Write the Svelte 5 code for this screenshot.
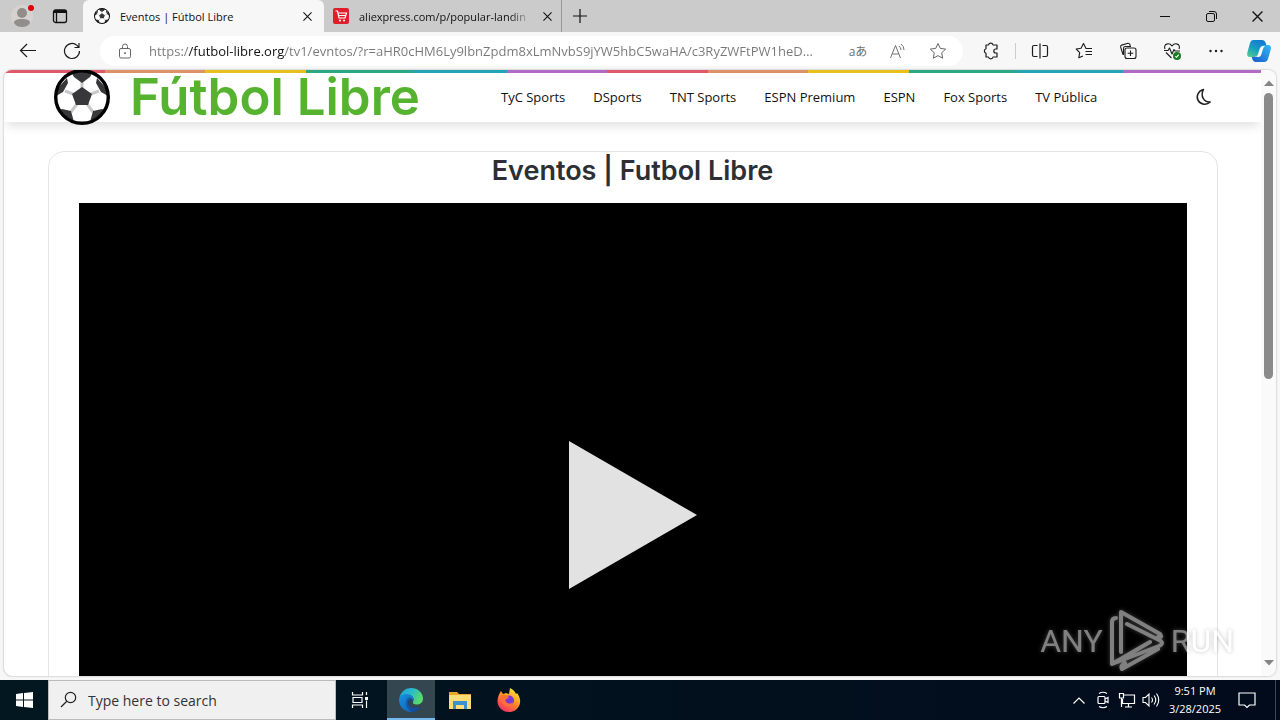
<script>
  const channels = ['TyC Sports', 'DSports', 'TNT Sports', 'ESPN Premium', 'ESPN', 'Fox Sports', 'TV Pública'];
  let url = $state('https://futbol-libre.org/tv1/evntos/?r=aHR0cHM6Ly9lbnZpdm8xLmNvbS9jYW5hbC5waHA/c3RyZWFtPW1heDE0MQ==');
  let query = $state('');
</script>

{#snippet ball(size)}
  <svg width={size} height={size} viewBox="0 0 56 56" aria-hidden="true">
    <circle cx="28" cy="28" r="26.5" fill="#fff" />
    <g stroke="#c9c9c9" stroke-width="3">
      <path d="M28 22V10M37 25l8-3M33 35l6 8M23 35l-6 8M19 25l-8-3" />
    </g>
    <g fill="#38383a">
      <path d="M28 18l10 7-4 11H22l-4-11z" />
      <path d="M17 3h22l-3 5-8 6-8-6z" />
      <path d="M43 9l10 11 1 7-7-4-5-9zM13 9L3 20l-1 7 7-4 5-9z" />
      <path d="M36 53l3-11 9-2 3 1-6 9zM20 53l-3-11-9-2-3 1 6 9z" />
    </g>
    <circle cx="28" cy="28" r="26.3" fill="none" stroke="#000" stroke-width="3.4" />
  </svg>
{/snippet}

{#snippet cross(size)}
  <svg width={size} height={size} viewBox="0 0 10 10" fill="none" stroke="currentColor" stroke-width="1.2"><path d="M.5.5l9 9M9.500.5l-9 9" /></svg>
{/snippet}

<div class="desktop">
  <div class="browser">
    <div class="tabs">
      <button class="profile" aria-label="Profile">
        <svg width="24" height="24" viewBox="0 0 24 24"><circle cx="12" cy="12" r="11" fill="#d5d2d0" /><circle cx="12" cy="9" r="5" fill="#918d8b" /><path d="M4 19c0-3 3-4 8-4s8 1 8 4c-2 3-5 4-8 4s-6-1-8-4z" fill="#918d8b" /><circle cx="21" cy="4" r="3" fill="#e3000b" /></svg>
      </button>
      <button class="workspace" aria-label="Tab actions">
        <svg width="16" height="16" viewBox="0 0 16 16" fill="none" stroke="#111" stroke-width="1.3"><rect x="1.500" y="2" width="13" height="12.500" rx="2" /><path d="M2 3.500h12" stroke-width="3" /><path d="M4.500 5v9" /></svg>
      </button>
      <div class="tab active">
        {@render ball(16)}
        <span class="tab-title">Eventos | Fútbol Libre</span>
        <button class="close" aria-label="Close tab">{@render cross(9)}</button>
      </div>
      <div class="tab">
        <svg width="16" height="16" viewBox="0 0 16 16"><rect width="16" height="16" rx="2" fill="#dd1f2d" /><path d="M2.500 3h2l1.500 7h6l1.500-5H5M6 7.500h7" fill="none" stroke="#fff" stroke-width="1.2" /><circle cx="7" cy="12.500" r="1" fill="#fff" /><circle cx="11" cy="12.500" r="1" fill="#fff" /></svg>
        <span class="tab-title">aliexpress.com/p/popular-landin</span>
        <button class="close" aria-label="Close tab">{@render cross(9)}</button>
      </div>
      <button class="newtab" aria-label="New tab">
        <svg width="14" height="14" viewBox="0 0 14 14" stroke="#111" stroke-width="1.2"><path d="M7 0v14M0 7h14" /></svg>
      </button>
      <div class="window-controls">
        <button aria-label="Minimize"><svg width="10" height="10" viewBox="0 0 10 10" stroke="#111"><path d="M0 5.500h10" /></svg></button>
        <button aria-label="Restore"><svg width="11" height="11" viewBox="0 0 11 11" fill="none" stroke="#111"><rect x=".5" y="2.500" width="8" height="8" rx="1.500" /><path d="M3 .5h5q2.500 0 2.500 2.500v5" /></svg></button>
        <button aria-label="Close">{@render cross(11)}</button>
      </div>
    </div>

    <div class="toolbar">
      <button aria-label="Back"><svg width="18" height="16" viewBox="0 0 18 16" fill="none" stroke="#1c1c1c" stroke-width="1.200"><path d="M8 1L1.500 7.500 8 14M1.500 7.500H17" /></svg></button>
      <button aria-label="Refresh"><svg width="18" height="18" viewBox="0 0 18 18" fill="none" stroke="#1c1c1c" stroke-width="1.200"><path d="M16.500 9a7.500 7.500 0 1 1-2.500-5.600l1.500 1.600M16 1v4.500h-4.500" /></svg></button>
      <div class="address">
        <button class="lock" aria-label="Site information"><svg width="14" height="16" viewBox="0 0 14 16" fill="none" stroke="#666"><rect x="1.500" y="5.500" width="11" height="9.500" rx="1.500" /><path d="M4.500 5.500V3.500a2.500 2.500 0 0 1 5 0v2" /><circle cx="7" cy="10.200" r=".6" fill="#666" /></svg></button>
        <input class="url" type="text" aria-label="Address" bind:value={url} />
        <button class="translate" aria-label="Translate">aあ</button>
        <button aria-label="Read aloud"><svg width="18" height="18" viewBox="0 0 18 18" fill="none" stroke="#707070"><path d="M1.500 16L6.500 3.500 11.500 16M3.200 12h6.600M10 4q2 1.500 2 4M12 2q3 2 3 6" /></svg></button>
        <button aria-label="Add to favorites"><svg width="18" height="18" viewBox="0 0 18 18" fill="none" stroke="#666" stroke-linejoin="round"><path d="M9 1.500l2.300 4.900 5.400.7-4 3.700 1 5.400L9 13.600l-4.700 2.600 1-5.400-4-3.700 5.400-.7z" /></svg></button>
      </div>
      <button aria-label="Extensions"><svg width="18" height="18" viewBox="0 0 18 18" fill="none" stroke="#1c1c1c" stroke-width="1.200" stroke-linejoin="round"><path d="M4 3h2.500a2.300 2.300 0 0 1 4.500 0H15v4h-1.200a2 2 0 0 0 0 4H15v4h-4a2.300 2.300 0 0 1-4.500 0H4v-3.800A2.300 2.300 0 0 1 4 6.800z" /></svg></button>
      <span class="separator"></span>
      <button aria-label="Split screen"><svg width="18" height="18" viewBox="0 0 18 18" fill="none" stroke="#1c1c1c" stroke-width="1.200"><path d="M6.500 3.500H3a1.500 1.500 0 0 0-1.500 1.500v8A1.500 1.500 0 0 0 3 14.500h3.500M9 1.500v15M11.500 3.500H15A1.500 1.500 0 0 1 16.500 5v8a1.500 1.500 0 0 1-1.500 1.500h-3.500" /></svg></button>
      <button aria-label="Favorites"><svg width="18" height="18" viewBox="0 0 18 18" fill="none" stroke="#1c1c1c" stroke-width="1.100" stroke-linejoin="round"><path d="M17 6.500h-6L8.500 1.500 6 6.200l-4.800.8 3.500 3.600-.9 5.200L8 14M10.500 9.500H17M10.500 12.500H17" /></svg></button>
      <button aria-label="Collections"><svg width="18" height="18" viewBox="0 0 18 18" fill="none" stroke="#1c1c1c" stroke-width="1.100"><path d="M4 12.500L1.700 5.300q-.4-1.600 1-2.200L9 1.300q1.300-.2 1.800 1.200l.5 1.500M4.500 13V6.500Q4.500 4.500 6.500 4.500H12" /><rect x="6" y="6" width="11" height="10.500" rx="2" fill="#f7f7f7" /><path d="M11.500 8.500v5.500M8.700 11.200h5.600" /></svg></button>
      <button aria-label="Browser essentials"><svg width="18" height="18" viewBox="0 0 18 18" fill="none" stroke="#1c1c1c" stroke-width="1.100" stroke-linejoin="round"><path d="M2 7C0 2 6 0 9 4c3-4 9-2 7 3M1 8.500h4L6.500 6l2.500 6 2-4.500 1 1.500h5M3 10.500l5.500 5.500" /><circle cx="14" cy="14" r="4" fill="#187d20" stroke="none" /><path d="M12.300 14.300l1.200 1 2.200-2.600" stroke="#fff" /></svg></button>
      <button aria-label="Settings and more"><svg width="14" height="4" viewBox="0 0 14 4" fill="#1c1c1c"><circle cx="1.500" cy="2" r="1.200" /><circle cx="7" cy="2" r="1.200" /><circle cx="12.500" cy="2" r="1.200" /></svg></button>
      <button class="copilot" aria-label="Copilot">
        <svg width="26" height="24" viewBox="0 0 26 24">
          <defs>
            <linearGradient id="co1" x1="0" y1="1" x2=".6" y2="0"><stop stop-color="#59d08b" /><stop offset=".5" stop-color="#18a2bd" /><stop offset="1" stop-color="#1479d5" /></linearGradient>
            <linearGradient id="co2" x1="0" y1="1" x2="1" y2="0"><stop stop-color="#1559cb" /><stop offset="1" stop-color="#35b9f5" /></linearGradient>
          </defs>
          <path d="M7 1h9q3 0 4 4l.5 2H17q-2.500 0-3.300 3L12 15q-1 3-4 3H4Q0 18 1.500 13L4 4q.8-3 3-3z" fill="url(#co1)" />
          <path d="M19 23h-9q-3 0-4-4l-.3-1H9q2.500 0 3.300-3L14 9q1-3 4-3h4q4 0 2.600 5L22 20q-.8 3-3 3z" fill="url(#co2)" />
          <path d="M16.500 7q-2 .5-2.800 3L12 15.500q-.6 2-2 2.500h2.500q2 0 2.800-2.500L17 10q.6-2 2-3z" fill="#f7f7f7" />
        </svg>
      </button>
    </div>

    <div class="viewport">
      <div class="page">
        <div class="rainbow"></div>
        <header>
          <a class="brand" href="#inicio">
            {@render ball(56)}
            <span>Fútbol Libre</span>
          </a>
          <nav>
            {#each channels as channel}
              <a href="#canal">{channel}</a>
            {/each}
          </nav>
          <button class="theme" aria-label="Dark mode"><svg width="18" height="18" viewBox="0 0 18 18" fill="none" stroke="#222" stroke-width="1.500" stroke-linejoin="round"><path d="M8.500 1.500C3 3 .8 8.500 3.200 12.500c2.500 4.300 8.500 5 12 1.500C9 14.500 5 8 8.500 1.500z" /></svg></button>
        </header>
        <main>
          <h1>Eventos | Futbol Libre</h1>
          <div class="player">
            <button class="play" aria-label="Play"><svg width="128" height="148" viewBox="0 0 128 148"><path d="M0 0l128 74L0 148z" fill="#e2e2e2" /></svg></button>
          </div>
        </main>
      </div>
      <div class="scrollbar">
        <svg width="10" height="6" viewBox="0 0 10 6"><path d="M0 6l5-5.500L10 6z" fill="#858585" /></svg>
        <div class="track"><div class="thumb"></div></div>
        <svg width="10" height="6" viewBox="0 0 10 6"><path d="M0 0l5 5.500L10 0z" fill="#858585" /></svg>
      </div>
    </div>
  </div>

  <div class="taskbar">
    <button class="start" aria-label="Start"><svg width="17" height="16" viewBox="0 0 17 16" fill="#fff"><path d="M0 2l7-1v6.500H0zM8 .900L17 0v7.500H8zM0 8.500h7V15l-7-1zM8 8.500h9V16l-9-1z" /></svg></button>
    <label class="search">
      <svg width="18" height="18" viewBox="0 0 18 18" fill="none" stroke="#222" stroke-width="1.200"><circle cx="10.500" cy="6.500" r="5.200" /><path d="M6.800 10.300L1 16" /></svg>
      <input type="text" aria-label="Search" placeholder="Type here to search" bind:value={query} />
    </label>
    <button class="taskview" aria-label="Task view"><svg width="18" height="16" viewBox="0 0 18 16" fill="none" stroke="#fff" stroke-width="1.200"><path d="M1.500 0v3h10V0M1.500 16v-3h10v3M2 5.500h9v5H2zM15.500 0v3M15.500 8.500V16" /><path d="M14 5h3v3h-3z" fill="#fff" stroke="none" /></svg></button>
    <button class="app open" aria-label="Edge">
      <svg width="24" height="24" viewBox="0 0 24 24">
        <defs>
          <linearGradient id="e1" x1="0" y1="0" x2="1" y2=".4"><stop stop-color="#219ed8" /><stop offset=".5" stop-color="#28b9ce" /><stop offset="1" stop-color="#58da6d" /></linearGradient>
          <linearGradient id="e2" x1="0" y1="0" x2="1" y2="1"><stop stop-color="#1593df" /><stop offset="1" stop-color="#1456ac" /></linearGradient>
        </defs>
        <path d="M.5 10C2 3 7 0 12 0c7 0 12 5 12 10.500 0 4-3 6-6.500 6-3 0-4-1-3.500-2.500 2-4-1-7-5-7-4 0-7 1-8.500 3z" fill="url(#e1)" />
        <path d="M0 12c0-4 4-6 8-6 5 0 7.500 4 6 7-1-3-5-2-5 1.500 0 5 6 7 12 4.500C19 22.500 16 24 12 24 5 24 0 18 0 12z" fill="url(#e2)" />
        <path d="M8.800 10C5 14 7 21 13 24c4 0 7-2 9-5.500-6 2.500-12 .5-12-4 0-2 2-3 4-1.500C14 10 11 9 8.800 10z" fill="#123f8b" opacity=".55" />
      </svg>
    </button>
    <button class="app" aria-label="File Explorer"><svg width="22" height="19" viewBox="0 0 22 19"><path d="M0 1h8l2 2h12v15H0z" fill="#e9a72b" /><path d="M0 4h22v14H0z" fill="#ffdc76" /><path d="M4 10h14v8h-3v-4H7v4H4z" fill="#3b91cb" /></svg></button>
    <button class="app" aria-label="Firefox">
      <svg width="24" height="24" viewBox="0 0 24 24">
        <defs><linearGradient id="f1" x1=".8" y1="0" x2=".2" y2="1"><stop stop-color="#fff044" /><stop offset=".45" stop-color="#ff9421" /><stop offset="1" stop-color="#f2276c" /></linearGradient></defs>
        <path d="M4 3l2 3 3-1 3 1 1-6c4 2 5 4 6 6l1-1c3 4 4 8 2.500 12C20.500 21.500 17 24 12 24 5 24 .5 19 .5 13 .5 9 2 6 4 3z" fill="url(#f1)" />
        <circle cx="12" cy="12.500" r="5" fill="#7d37d7" />
        <path d="M4 8c4-2 6-1 8 1l-2 2c-2 0-2 2-.5 3.500S14 16 16 14c0 4-7 6-10 2-2-3-2-5-2-8z" fill="#ff7139" />
      </svg>
    </button>
    <div class="tray">
      <button aria-label="Show hidden icons"><svg width="12" height="7" viewBox="0 0 12 7" fill="none" stroke="#fff" stroke-width="1.200"><path d="M.5 6.500L6 1l5.500 5.500" /></svg></button>
      <button aria-label="Meet now"><svg width="14" height="18" viewBox="0 0 14 18" fill="none" stroke="#fff" stroke-width="1.200"><rect x="2" y="5.500" width="7" height="7" rx="1" /><path d="M9 8l3-1.500v5L9 10M3 2.500q4-2.500 8 0M3 15.500q4 2.500 8 0" /></svg></button>
      <button aria-label="Network"><svg width="18" height="16" viewBox="0 0 18 16" fill="none" stroke="#fff" stroke-width="1.200"><path d="M6 3h10.500v8.500H4.500V7M10.500 11.500V15M7 15h7M1.500 1.500h4V6h-4zM3.500 6v9" /></svg></button>
      <button aria-label="Volume"><svg width="18" height="16" viewBox="0 0 18 16" fill="none" stroke="#fff" stroke-width="1.100"><path d="M1 5.500h2.500L7 2v12l-3.500-3.500H1zM9.500 5.500q2 2.500 0 5M12 3.500q3.500 4.500 0 9M14.500 1.500q4.500 6.500 0 13" /></svg></button>
      <button class="clock"><span>9:51 PM</span><span>3/28/2025</span></button>
      <button class="notify" aria-label="Notifications"><svg width="18" height="17" viewBox="0 0 18 17" fill="none" stroke="#fff" stroke-width="1.200"><path d="M1 1h16v12h-5.500L9 15.500 6.500 13H1z" /></svg></button>
      <span class="peek"></span>
    </div>
  </div>

  <div class="watermark">
    <span>ANY</span>
    <svg width="56" height="62" viewBox="0 0 56 62" fill="none" stroke="#fff" stroke-width="4" stroke-linejoin="round" stroke-linecap="round"><path d="M7 8Q3 8 3 12v42L50 36q6-3 0-6L18 14M12 42V2l39 22q3 4-2 3M3 54l38-22M13 59l36-20M13 59q-2-3 3-6" /></svg>
    <span>RUN</span>
  </div>
</div>

<style>
  :global(body) { overflow: hidden; }
  .desktop { height: 100vh; display: flex; flex-direction: column; position: relative; font-family: "Open Sans", "Noto Sans", "Noto Sans CJK JP", sans-serif; color: #111; }
  button { border: 0; padding: 0; background: none; color: inherit; font-family: inherit; display: flex; align-items: center; justify-content: center; flex: none; }
  svg { display: block; flex: none; }
  a { color: inherit; text-decoration: none; }
  input { font-family: inherit; border: 0; outline: 0; min-width: 0; padding: 0; }
  .browser { flex: 1; min-height: 0; display: flex; flex-direction: column; background: #f7f7f7; }
  .tabs { height: 32px; display: flex; background: #cbcbcb; flex: none; }
  .profile { width: 44px; }
  .workspace { width: 32px; margin-right: 7px; }
  .tab { width: 238px; box-sizing: border-box; display: flex; align-items: center; gap: 10px; padding: 0 8px 0 9px; border-right: 1px solid #999; }
  .tab.active { width: 241px; padding: 0 11px; border: 0; border-radius: 6px 6px 0 0; background: #f7f7f7; }
  .tab-title { flex: 1; font-size: 11px; white-space: nowrap; overflow: hidden; }
  .tab:not(.active) .tab-title { mask-image: linear-gradient(90deg, #000 88%, transparent); }
  .close { width: 12px; }
  .newtab { width: 36px; }
  .window-controls { display: flex; margin-left: auto; }
  .window-controls button { width: 46px; }
  .toolbar { height: 38px; display: flex; align-items: center; padding-left: 6px; flex: none; }
  .toolbar button { width: 44px; height: 30px; }
  .toolbar .copilot { width: 42px; }
  .separator { width: 1px; height: 16px; margin: 0 2px; background: #ccc; }
  .address { flex: 1; min-width: 0; height: 30px; display: flex; align-items: center; background: #fff; border-radius: 15px; margin: 0 6px; padding-right: 5px; }
  .toolbar .address button { width: 40px; }
  .toolbar .address .lock { width: 49px; }
  .toolbar .address .translate { color: #707070; font-size: 12px; }
  .url { flex: 1; height: 28px; margin-right: 20px; font-size: 13px; text-overflow: ellipsis; color: transparent; background: linear-gradient(90deg, #777 40px, #111 40px, #111 136px, #777 136px); background-clip: text; }
  .viewport { flex: 1; min-height: 0; display: flex; margin: 0 4px 4px; border-radius: 8px; overflow: hidden; background: #fff; box-shadow: 0 0 2px #999; }
  .page { flex: 1; min-width: 0; overflow: hidden; font-family: "Open Sans", sans-serif; }
  .rainbow { height: 3px; background: linear-gradient(90deg, #e0586c 8%, #de9268 8%, #de9268 16%, #e7c21c 16%, #e7c21c 24%, #2ba984 24%, #2ba984 32%, #24a5b5 33%, #24a5b5 40%, #b16bc4 40%, #b16bc4 48%, #e0586c 48%, #e0586c 56%, #de9268 56%, #de9268 64%, #e7c21c 64%, #e7c21c 72%, #2ba984 72%, #2ba984 80%, #24a5b5 81%, #24a5b5 89%, #b16bc4 89%); }
  header { height: 49px; box-sizing: border-box; display: flex; align-items: center; padding: 0 48px 1px 50px; box-shadow: 0 6px 10px -2px rgba(0, 0, 0, .12); }
  .brand { display: flex; align-items: center; gap: 20px; width: 447px; color: #55b32f; font: 600 51px/48px Inter, sans-serif; white-space: nowrap; }
  nav { display: flex; gap: 28px; font-size: 13px; line-height: 20px; white-space: nowrap; }
  .theme { margin-left: auto; width: 18px; }
  main { max-width: 1168px; margin: 29px auto 0; border: 1px solid #e4e4e4; border-radius: 16px; }
  h1 { margin: 0; padding: 3px 0 16px; text-align: center; color: #2c2f34; font: 600 27px/32px Inter, sans-serif; }
  .player { margin: 0 30px; aspect-ratio: 16 / 9; background: #000; display: flex; align-items: center; justify-content: center; }
  .scrollbar { width: 15px; box-sizing: border-box; padding: 10px 0; background: #fafafa; display: flex; flex-direction: column; align-items: center; gap: 7px; }
  .track { flex: 1; width: 9px; }
  .thumb { height: 51%; background: #8a8a8a; border-radius: 5px; }
  .taskbar { height: 40px; flex: none; display: flex; background: linear-gradient(90deg, #021720, #020b1c); color: #fff; }
  .start { width: 48px; }
  .search { width: 288px; box-sizing: border-box; border: 1px solid #bbb; display: flex; align-items: center; gap: 10px; padding: 0 11px; background: #f0f0f0; }
  .search input { flex: 1; background: none; font-size: 14px; }
  .search input::placeholder { color: #333; opacity: 1; }
  .taskview { width: 48px; margin-right: 3px; }
  .app { width: 49px; }
  .app.open { width: 48px; background: #344750; box-shadow: inset 0 -2px #76b9ed; }
  .tray { display: flex; margin-left: auto; }
  .tray button { width: 24px; }
  .tray .clock { width: 64px; flex-direction: column; font-size: 11px; line-height: 18px; }
  .tray .notify { width: 40px; margin-right: 8px; }
  .peek { width: 4px; border-left: 1px solid #3d4654; }
  .watermark { position: absolute; right: 46px; bottom: 48px; display: flex; align-items: center; gap: 6px; color: #fff; opacity: .5; font: 32px/62px Roboto, sans-serif; filter: drop-shadow(0 0 2px #888); pointer-events: none; }
</style>
